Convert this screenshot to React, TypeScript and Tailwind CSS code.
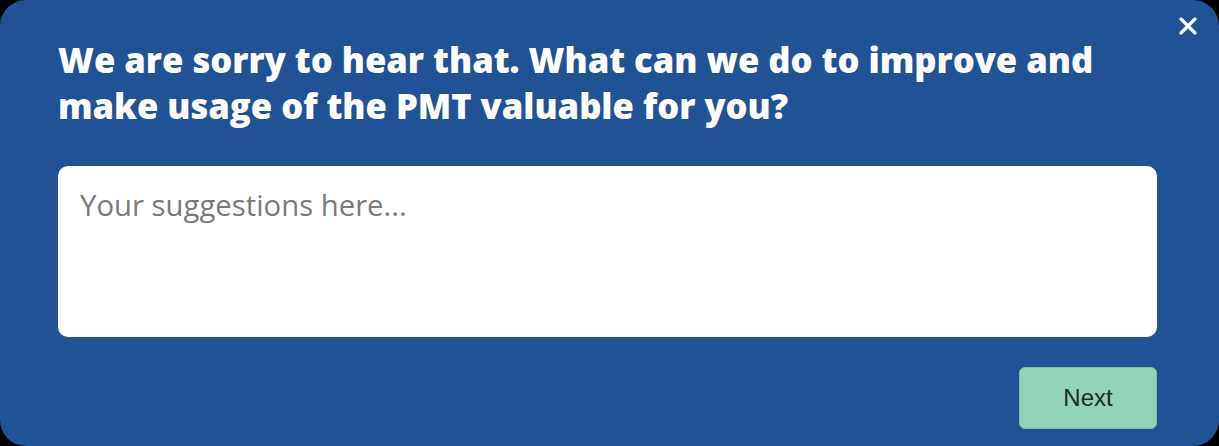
import { useState } from 'react';

export default function App() {
  const [text, setText] = useState('');

  return (
    <div className="flex h-[446px] w-[1219px] bg-black">
      <div className="relative flex flex-1 flex-col rounded-[26px] bg-[#215295] pl-[58px] pr-[62px] pt-[37px] font-['Open_Sans',sans-serif]">
        {/* Close */}
        <button className="absolute right-[20px] top-[15px] flex size-[22px] items-center justify-center text-white">
          <svg viewBox="0 0 20 20" className="size-[20px]" fill="none" stroke="currentColor" strokeWidth="3.2" strokeLinecap="round">
            <path d="M3 3 L17 17 M17 3 L3 17" />
          </svg>
        </button>

        <h2 className="text-[34.6px] font-extrabold leading-[46px] text-white">
          We are sorry to hear that. What can we do to improve and
          <br />
          make usage of the PMT valuable for you?
        </h2>

        <textarea
          value={text}
          onChange={(e) => setText(e.target.value)}
          placeholder="Your suggestions here..."
          className="mt-[37px] h-[171px] w-full resize-none rounded-[10px] bg-white px-[22px] py-[22px] text-[29.3px] leading-[34px] text-gray-800 placeholder-[#7a7a7a] outline-none"
        />

        <div className="mt-[30px] flex justify-end">
          <button className="flex h-[62px] w-[138px] items-center justify-center rounded-[6px] border border-[#7fc0a6] bg-[#93d3ba] font-['Liberation_Sans',sans-serif] text-[24px] text-[#1b2b27]">
            Next
          </button>
        </div>
      </div>
    </div>
  );
}
